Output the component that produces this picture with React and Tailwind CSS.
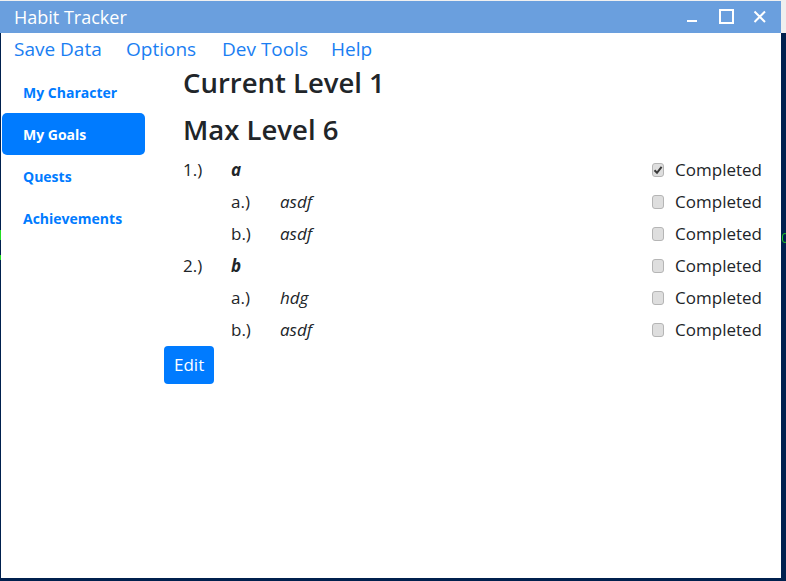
import React from 'react';

const goals = [
  {
    num: '1.)',
    title: 'a',
    done: true,
    subs: [
      { num: 'a.)', title: 'asdf', done: false },
      { num: 'b.)', title: 'asdf', done: false },
    ],
  },
  {
    num: '2.)',
    title: 'b',
    done: false,
    subs: [
      { num: 'a.)', title: 'hdg', done: false },
      { num: 'b.)', title: 'asdf', done: false },
    ],
  },
];

const font = { fontFamily: '"Open Sans", "Noto Sans", sans-serif' };

function Check({ checked }) {
  return (
    <span className="w-[14px] h-[14px] rounded-[3px] border border-[#b5b5b5] bg-[#dedede] flex items-center justify-center">
      {checked && (
        <svg width="10" height="10" viewBox="0 0 10 10">
          <path d="M1.5 5.2 L4 7.8 L8.6 1.8" fill="none" stroke="#3a3a3a" strokeWidth="2" />
        </svg>
      )}
    </span>
  );
}

function Row({ num, title, done, sub }) {
  return (
    <div className="h-[32px] flex items-center text-[17px] text-[#212529]">
      {sub ? (
        <>
          <span className="w-[67px]" />
          <span className="w-[49px]">{num}</span>
          <span className="italic">{title}</span>
        </>
      ) : (
        <>
          <span className="w-[19px]" />
          <span className="w-[48px]">{num}</span>
          <span className="italic font-bold">{title}</span>
        </>
      )}
      <span className="ml-auto flex items-center gap-[11px] w-[110px]">
        <Check checked={done} />
        <span>Completed</span>
      </span>
    </div>
  );
}

export default function App() {
  const navItems = ['My Character', 'My Goals', 'Quests', 'Achievements'];
  const menu = [
    ['Save Data', 'w-[112px]'],
    ['Options', 'w-[96px]'],
    ['Dev Tools', 'w-[109px]'],
    ['Help', 'w-[60px]'],
  ];

  return (
    <div className="w-[786px] h-[581px] bg-[#00204e] overflow-hidden flex flex-col" style={font}>
      {/* title bar */}
      <div className="flex bg-[#f0f0f0] h-[33px]">
        <div className="w-[781px] h-[32px] mt-[1px] bg-[#6a9fde] flex items-center pl-[14px] text-white">
          <span className="text-[18px] leading-none">Habit Tracker</span>
          <div className="ml-auto flex items-center h-full">
            <svg width="12" height="20" viewBox="0 0 12 20" className="mr-[20px]">
              <rect x="0" y="13" width="10" height="2" fill="white" />
            </svg>
            <svg width="16" height="16" viewBox="0 0 16 16" className="mr-[18px]">
              <rect x="1" y="1" width="13" height="13" fill="none" stroke="white" strokeWidth="2" />
            </svg>
            <svg width="14" height="14" viewBox="0 0 14 14" className="mr-[14px]">
              <path d="M1.5 1.5 L12 12 M12 1.5 L1.5 12" stroke="white" strokeWidth="2" />
            </svg>
          </div>
        </div>
        <div className="flex-1 h-[29px] bg-[#efefef]" />
      </div>

      <div className="flex flex-1">
        <div className="w-[1px] relative">
          <span className="absolute left-0 top-[197px] w-[1px] h-[10px] bg-[#22dd22]" />
          <span className="absolute left-0 top-[222px] w-[1px] h-[5px] bg-[#22dd22]" />
        </div>
        <div className="w-[780px] h-[545px] bg-white flex flex-col">
          {/* menu */}
          <div className="h-[33px] flex items-center pl-[13px] text-[19px] text-[#1a7ef2]">
            {menu.map(([m, w]) => (
              <span key={m} className={w}>{m}</span>
            ))}
          </div>

          <div className="flex pt-[5px]">
            {/* sidebar */}
            <nav className="w-[143px] ml-[1px] flex flex-col">
              {navItems.map((n) => (
                <div
                  key={n}
                  className={`h-[42px] flex items-center pl-[21px] rounded-[5px] text-[14px] font-bold ${
                    n === 'My Goals' ? 'bg-[#007bff] text-white' : 'text-[#007bff]'
                  }`}
                >
                  {n}
                </div>
              ))}
            </nav>

            {/* main */}
            <main className="ml-[19px] flex-1 flex flex-col pr-[19px]">
              <h2 className="pl-[19px] h-[24px] flex items-center text-[27.5px] font-semibold text-[#212529] whitespace-nowrap">
                Current Level 1
              </h2>
              <h2 className="pl-[19px] mt-[23px] h-[24px] flex items-center text-[27.5px] font-semibold text-[#212529] whitespace-nowrap">
                Max Level 6
              </h2>
              <div className="mt-[12px]">
                {goals.map((g) => (
                  <div key={g.num}>
                    <Row num={g.num} title={g.title} done={g.done} />
                    {g.subs.map((s) => (
                      <Row key={s.num} num={s.num} title={s.title} done={s.done} sub />
                    ))}
                  </div>
                ))}
              </div>
              <div>
                <button className="h-[38px] px-[10px] rounded-[4px] bg-[#007bff] text-white text-[17px]">
                  Edit
                </button>
              </div>
            </main>
          </div>
        </div>
        <div className="flex-1 relative">
          <span className="absolute left-[1px] top-[200px] w-[6px] h-[10px] rounded-full border border-[#22cc22]" />
        </div>
      </div>
    </div>
  );
}
